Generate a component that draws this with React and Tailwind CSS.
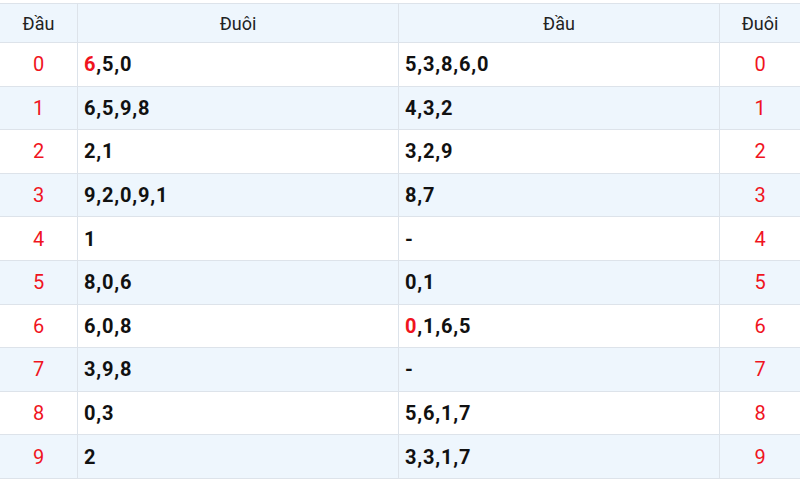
const rows = [
  { d: "0", a: [["6", true], [",5,0"]], b: [["5,3,8,6,0"]] },
  { d: "1", a: [["6,5,9,8"]], b: [["4,3,2"]] },
  { d: "2", a: [["2,1"]], b: [["3,2,9"]] },
  { d: "3", a: [["9,2,0,9,1"]], b: [["8,7"]] },
  { d: "4", a: [["1"]], b: [["-"]] },
  { d: "5", a: [["8,0,6"]], b: [["0,1"]] },
  { d: "6", a: [["6,0,8"]], b: [["0", true], [",1,6,5"]] },
  { d: "7", a: [["3,9,8"]], b: [["-"]] },
  { d: "8", a: [["0,3"]], b: [["5,6,1,7"]] },
  { d: "9", a: [["2"]], b: [["3,3,1,7"]] },
];

const Parts = ({ parts }) =>
  parts.map(([t, red], i) => (
    <span key={i} className={red ? "text-[#f0141e]" : ""}>
      {t}
    </span>
  ));

export default function App() {
  return (
    <div className="bg-white w-[800px] h-[479px] overflow-hidden font-['Roboto',sans-serif]">
      <div className="mt-[3px] border-t border-[#dde3ea] grid grid-cols-[78px_321px_321px_80px]">
        {["Đầu", "Đuôi", "Đầu", "Đuôi"].map((h, i) => (
          <div
            key={i}
            className={`h-[39px] bg-[#eef6fd] border-b border-[#dde3ea] flex items-center justify-center text-[18px] text-[#222] ${
              i < 3 ? "border-r" : ""
            }`}
          >
            {h}
          </div>
        ))}
        {rows.map((r, idx) => {
          const bg = idx % 2 === 1 ? "bg-[#eef6fd]" : "bg-white";
          return [
            <div
              key={r.d + "a"}
              className={`h-[43.6px] ${bg} border-r border-b border-[#dde3ea] flex items-center justify-center text-[20px] text-[#f0141e]`}
            >
              {r.d}
            </div>,
            <div
              key={r.d + "b"}
              className={`h-[43.6px] ${bg} border-r border-b border-[#dde3ea] flex items-center pl-[6px] text-[20px] tracking-[0.8px] font-bold text-[#111]`}
            >
              <Parts parts={r.a} />
            </div>,
            <div
              key={r.d + "c"}
              className={`h-[43.6px] ${bg} border-r border-b border-[#dde3ea] flex items-center pl-[6px] text-[20px] tracking-[0.8px] font-bold text-[#111]`}
            >
              <Parts parts={r.b} />
            </div>,
            <div
              key={r.d + "d"}
              className={`h-[43.6px] ${bg} border-b border-[#dde3ea] flex items-center justify-center text-[20px] text-[#f0141e]`}
            >
              {r.d}
            </div>,
          ];
        })}
      </div>
    </div>
  );
}
